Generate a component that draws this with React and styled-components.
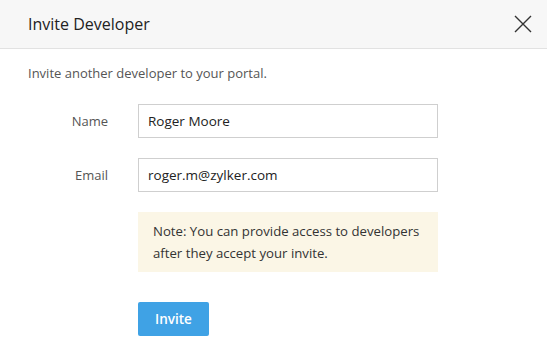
import React, { useState } from 'react';
import styled, { createGlobalStyle } from 'styled-components';

const GlobalStyle = createGlobalStyle`
  body {
    margin: 0;
    background: #ffffff;
    font-family: "Open Sans", "Liberation Sans", sans-serif;
  }
`;

const App = () => {
  const [name, setName] = useState('Roger Moore');
  const [email, setEmail] = useState('roger.m@zylker.com');

  return (
    <Dialog>
      <GlobalStyle />
      <Header>
        <Title>Invite Developer</Title>
        <CloseButton aria-label="Close">
          <svg width="18" height="18" viewBox="0 0 18 18">
            <path d="M1 1 L17 17 M17 1 L1 17" stroke="#333" strokeWidth="1.4" fill="none" />
          </svg>
        </CloseButton>
      </Header>

      <Body>
        <Intro>Invite another developer to your portal.</Intro>

        <Form>
          <Label>Name</Label>
          <Input value={name} onChange={(e) => setName(e.target.value)} />

          <Label>Email</Label>
          <Input value={email} onChange={(e) => setEmail(e.target.value)} />

          <span />
          <Note>
            Note: You can provide access to developers after they accept your invite.
          </Note>

          <span />
          <Actions>
            <InviteButton>Invite</InviteButton>
          </Actions>
        </Form>
      </Body>
    </Dialog>
  );
};

// -------------------------------------------------------------------------
// Styled Components:

const Dialog = styled.div`
  width: 547px;
  height: 364px;
  background: #fff;
  color: #333;
`;

const Header = styled.div`
  height: 48px;
  display: flex;
  align-items: center;
  justify-content: space-between;
  padding: 0 15px 0 28px;
  background: #f7f7f7;
  border-bottom: 1px solid #e2e2e2;
`;

const Title = styled.h1`
  margin: 0;
  font-size: 16px;
  font-weight: 400;
  color: #222;
`;

const CloseButton = styled.button`
  display: flex;
  padding: 0;
  border: none;
  background: none;
  cursor: pointer;
`;

const Body = styled.div`
  padding: 15px 28px 0;
`;

const Intro = styled.p`
  margin: 0;
  font-size: 13px;
  line-height: 18px;
  color: #555;
`;

const Form = styled.div`
  display: grid;
  grid-template-columns: 80px 300px;
  column-gap: 30px;
  row-gap: 20px;
  align-items: center;
  margin-top: 22px;
`;

const Label = styled.label`
  text-align: right;
  font-size: 13px;
  color: #555;
`;

const Input = styled.input`
  box-sizing: border-box;
  width: 300px;
  height: 34px;
  padding: 0 9px;
  border: 1px solid #cfcfcf;
  border-radius: 0;
  font-family: inherit;
  font-size: 13.5px;
  color: #222;

  :focus {
    outline: none;
  }
`;

const Note = styled.div`
  box-sizing: border-box;
  width: 300px;
  padding: 8px 15px;
  background: #fbf6e6;
  font-size: 13.2px;
  line-height: 22px;
  color: #333;
`;

const Actions = styled.div`
  margin-top: 10px;
`;

const InviteButton = styled.button`
  width: 71px;
  height: 34px;
  border: none;
  border-radius: 2px;
  background: #3fa2e5;
  color: #fff;
  font-family: inherit;
  font-size: 13.5px;
  font-weight: 600;
  cursor: pointer;
`;

export default App;
